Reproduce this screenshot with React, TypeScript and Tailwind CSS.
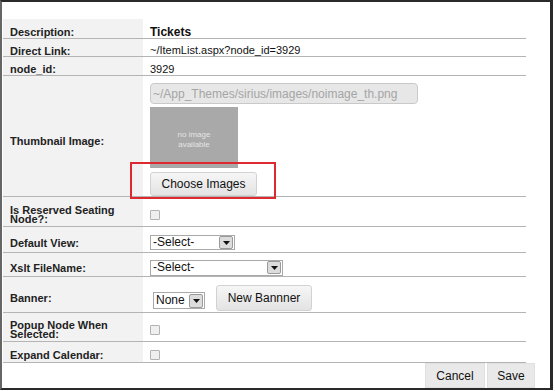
import React from 'react';

const Select = ({ label, width, height = 'h-[15px]', arrowH = 'h-[13px]' }: { label: string; width: string; height?: string; arrowH?: string }) => (
  <div className={`${width} ${height} flex items-center justify-between border border-[#a9a9a9] bg-white pl-[2px] pr-[1px]`}>
    <span className="text-[12px] leading-[13px] text-[#111]">{label}</span>
    <span className={`w-[14px] ${arrowH} flex items-center justify-center border border-[#9a9a9a] bg-[#dcdcdc] rounded-[2px]`}>
      <svg width="7" height="4" viewBox="0 0 7 4">
        <path d="M0 0 L7 0 L3.5 4 Z" fill="#111" />
      </svg>
    </span>
  </div>
);

const Checkbox = () => (
  <div className="w-[10px] h-[10px] border border-[#b3b3b3] bg-[#efefef] rounded-[1px]" />
);

const Row = ({ label, height, children, multi }: { label: string; height: string; children?: React.ReactNode; multi?: boolean }) => (
  <div className={`flex ${height} border-b border-[#b4b4b4]`}>
    <div className="w-[140px] bg-[#f2f2f2] pt-[6px] pl-[7px] flex items-center">
      <span className={`text-[11px] font-bold text-[#222] ${multi ? 'leading-[9px]' : 'leading-[12px]'}`}>{label}</span>
    </div>
    <div className="flex-1 pt-[6px] pl-[7px] flex items-center text-[11px] text-[#111]">{children}</div>
  </div>
);

export default function App() {
  return (
    <div className="w-[555px] h-[391px] bg-white" style={{ fontFamily: '"Liberation Sans", Arial, sans-serif' }}>
      <div className="w-[553px] h-[390px] border-t-2 border-b-2 border-l-2 border-r-[3px] border-[#2a2a2a] border-l-[#666] flex flex-col">
        <div className="ml-[1px] w-[523px] pt-[17px]">
          <Row label="Description:" height="h-[20px]">
            <span className="text-[12px] font-bold text-[#111]">Tickets</span>
          </Row>
          <Row label="Direct Link:" height="h-[18px]">~/ItemList.aspx?node_id=3929</Row>
          <Row label="node_id:" height="h-[19px]">3929</Row>
          <div className="relative flex h-[121px] border-b border-[#b4b4b4]">
            <div className="w-[140px] bg-[#f2f2f2] pt-[9px] pl-[7px] flex items-center">
              <span className="text-[11px] font-bold text-[#222] leading-[12px]">Thumbnail Image:</span>
            </div>
            <div className="flex-1 pt-[7px] pl-[7px] flex flex-col">
              <div className="w-[268px] h-[21px] rounded-[4px] border border-[#c9c9c9] bg-[#e7e7e7] pl-[2px] flex items-center text-[12px] text-[#a5a5a5]">
                ~/App_Themes/sirius/images/noimage_th.png
              </div>
              <div className="mt-[3px] w-[88px] h-[61px] bg-[#a9a9a9] flex flex-col items-center justify-center pt-[4px] text-[8px] leading-[10px] text-[#e4e4e4]">
                <span>no image</span>
                <span>available</span>
              </div>
              <button className="mt-[4px] w-[107px] h-[24px] rounded-[3px] border border-[#d2d2d2] bg-gradient-to-b from-[#f6f6f6] to-[#e3e3e3] text-[12px] text-[#111]">
                Choose Images
              </button>
            </div>
            <div className="absolute left-[127px] top-[86px] w-[146px] h-[37px] border-2 border-[#dc2a2e]" />
          </div>
          <Row label="Is Reserved Seating Node?:" height="h-[30px]" multi>
            <Checkbox />
          </Row>
          <Row label="Default View:" height="h-[26px]">
            <Select label="-Select-" width="w-[85px]" />
          </Row>
          <Row label="Xslt FileName:" height="h-[24px]">
            <Select label="-Select-" width="w-[133px]" height="h-[16px]" />
          </Row>
          <Row label="Banner:" height="h-[36px]">
            <div className="ml-[3px] mt-[6px]">
              <Select label="None" width="w-[52px]" height="h-[17px]" arrowH="h-[14px]" />
            </div>
            <button className="ml-[11px] w-[96px] h-[26px] rounded-[3px] border border-[#d2d2d2] bg-gradient-to-b from-[#f6f6f6] to-[#e3e3e3] text-[12px] text-[#111]">
              New Bannner
            </button>
          </Row>
          <Row label="Popup Node When Selected:" height="h-[29px]" multi>
            <Checkbox />
          </Row>
          <Row label="Expand Calendar:" height="h-[21px]">
            <Checkbox />
          </Row>
        </div>
        <div className="flex justify-end gap-[2px] pr-[15px] h-[25px]">
          <button className="w-[60px] h-[25px] bg-[#e9e9e9] border border-[#e0e0e0] text-[12px] text-[#111]">Cancel</button>
          <button className="w-[48px] h-[25px] bg-[#e9e9e9] border border-[#e0e0e0] text-[12px] text-[#111]">Save</button>
        </div>
      </div>
    </div>
  );
}
